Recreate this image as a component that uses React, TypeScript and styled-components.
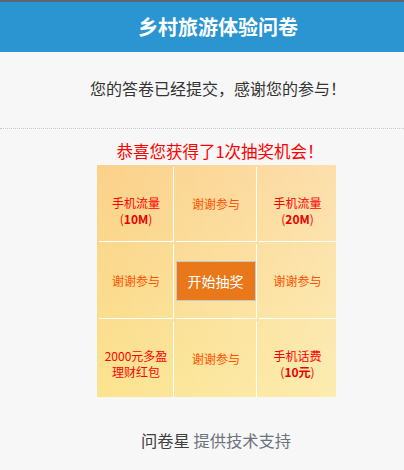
import React from 'react';
import styled, { createGlobalStyle } from 'styled-components';

const GlobalStyle = createGlobalStyle`
  html, body {
    margin: 0;
    padding: 0;
    background: #f7f7f7;
    font-family: "Noto Sans CJK SC", "Noto Sans", sans-serif;
  }
`;

const Page = styled.div`
  width: 404px;
  min-height: 470px;
  background: #f7f7f7;
`;

const Header = styled.header`
  height: 50px;
  border-top: 2px solid #5b6670;
  background: #2a95d0;
  display: flex;
  align-items: center;
  justify-content: center;
`;

const Title = styled.h1`
  margin: 0;
  color: #fff;
  font-size: 20px;
  font-weight: bold;
  line-height: 24px;
  padding-left: 32px;
`;

const Message = styled.div`
  padding: 26px 0 30px 32px;
  line-height: 20px;
  font-size: 16px;
  color: #333;
  text-align: center;
  border-bottom: 1px dotted #c8c8c8;
`;

const PrizeNote = styled.div`
  padding: 12px 0 0 36px;
  line-height: 20px;
  font-size: 16.5px;
  color: #ff0000;
  text-align: center;
`;

const Board = styled.div`
  margin: 4px 0 0 97px;
  width: 239px;
  height: 232px;
  box-sizing: border-box;
  padding: 2px 0 0 2px;
  display: grid;
  grid-template-columns: 75px 81px 77px;
  grid-template-rows: 75px 75px 76px;
  gap: 2px;
  background:
    linear-gradient(to right, rgba(255, 255, 255, 0), rgba(255, 255, 255, 0.3)),
    linear-gradient(to bottom, #fbd189, #fbe48f);
`;

const Cell = styled.div<{ $col: number; $row: number; $twoLine?: boolean }>`
  box-sizing: border-box;
  border-right: ${({ $col }) => ($col < 2 ? '1px solid #fff' : 'none')};
  border-bottom: ${({ $row }) => ($row < 2 ? '1px solid #fff' : 'none')};
  display: flex;
  flex-direction: column;
  align-items: center;
  justify-content: center;
  padding-top: ${({ $twoLine, $row }) => ($twoLine ? ($row === 0 ? '14px' : '10px') : '0')};
  font-size: 12px;
  line-height: 16.5px;
  text-align: center;
`;

const Prize = styled.span`
  color: #ff0000;
`;

const PrizeBold = styled.b`
  color: #e60000;
  font-weight: bold;
`;

const Thanks = styled.span`
  color: #ff5000;
`;

const StartButton = styled.button`
  width: 80px;
  height: 40px;
  margin: 0 0 0 -1px;
  padding: 0;
  border: 1px solid #c9c9c9;
  background: #e8781a;
  color: #fff;
  font-family: inherit;
  font-size: 14px;
  cursor: pointer;
`;

const Footer = styled.div`
  margin-top: 33px;
  padding-left: 28px;
  line-height: 20px;
  font-size: 16.3px;
  text-align: center;
  color: #3f3f3f;
`;

const Support = styled.span`
  color: #6b737c;
`;

type CellData =
  | { kind: 'prize'; name: string; amount?: string; lines?: string[] }
  | { kind: 'thanks' }
  | { kind: 'start' };

const cells: CellData[] = [
  { kind: 'prize', name: '手机流量', amount: '10M' },
  { kind: 'thanks' },
  { kind: 'prize', name: '手机流量', amount: '20M' },
  { kind: 'thanks' },
  { kind: 'start' },
  { kind: 'thanks' },
  { kind: 'prize', name: '', lines: ['2000元多盈', '理财红包'] },
  { kind: 'thanks' },
  { kind: 'prize', name: '手机话费', amount: '10元' },
];

const App: React.FC = () => {
  return (
    <Page>
      <GlobalStyle />
      <Header>
        <Title>乡村旅游体验问卷</Title>
      </Header>
      <Message>您的答卷已经提交，感谢您的参与！</Message>
      <PrizeNote>恭喜您获得了1次抽奖机会！</PrizeNote>
      <Board>
        {cells.map((cell, i) => {
          const col = i % 3;
          const row = Math.floor(i / 3);
          if (cell.kind === 'start') {
            return (
              <Cell key={i} $col={col} $row={row}>
                <StartButton>开始抽奖</StartButton>
              </Cell>
            );
          }
          if (cell.kind === 'thanks') {
            return (
              <Cell key={i} $col={col} $row={row}>
                <Thanks>谢谢参与</Thanks>
              </Cell>
            );
          }
          return (
            <Cell key={i} $col={col} $row={row} $twoLine>
              {cell.lines ? (
                cell.lines.map((l) => <Prize key={l}>{l}</Prize>)
              ) : (
                <>
                  <Prize>{cell.name}</Prize>
                  <Prize>
                    (<PrizeBold>{cell.amount}</PrizeBold>)
                  </Prize>
                </>
              )}
            </Cell>
          );
        })}
      </Board>
      <Footer>
        问卷星 <Support>提供技术支持</Support>
      </Footer>
    </Page>
  );
};

export default App;
